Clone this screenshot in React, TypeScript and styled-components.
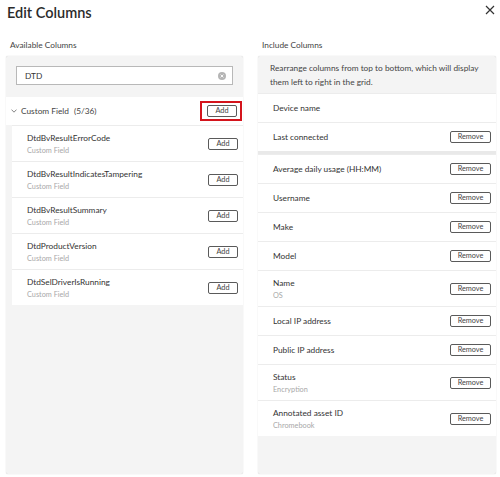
import * as React from "react";
import styled, { createGlobalStyle } from "styled-components";

const GlobalStyle = createGlobalStyle`
  html, body {
    margin: 0;
    padding: 0;
    background: #ffffff;
  }
  body {
    font-family: Lato, "Open Sans", "Liberation Sans", sans-serif;
    color: #333333;
  }
`;

const Dialog = styled.div`
  width: 500px;
  height: 477px;
  box-sizing: border-box;
  padding: 3px 4px 3px 6px;
  background: #ffffff;
  display: flex;
  flex-direction: column;
`;

const Header = styled.div`
  display: flex;
  justify-content: space-between;
  align-items: flex-start;
  height: 36px;
`;

const Title = styled.h1`
  margin: 1px 0 0 1px;
  font-size: 14.5px;
  font-weight: 600;
  color: #2b2b2b;
`;

const CloseButton = styled.button`
  border: 0;
  background: none;
  padding: 0;
  margin: 2px 1px 0 0;
  width: 10px;
  height: 10px;
  cursor: pointer;
  display: flex;
`;

const Columns = styled.div`
  flex: 1;
  display: grid;
  grid-template-columns: 237px 238px;
  column-gap: 15px;
`;

const Section = styled.section`
  display: flex;
  flex-direction: column;
`;

const SectionLabel = styled.div`
  font-size: 8.3px;
  color: #444;
  padding: 0 0 0 4px;
  height: 17px;
  line-height: 12px;
`;

const Panel = styled.div`
  height: 418px;
  background: #f4f4f4;
  box-shadow: 0 0 1px rgba(0, 0, 0, 0.25);
  border-radius: 2px;
  display: flex;
  flex-direction: column;
  overflow: hidden;
`;

const SearchBar = styled.div`
  padding: 10px 10px 12px;
`;

const SearchBox = styled.div`
  height: 19px;
  box-sizing: border-box;
  background: #fff;
  border: 1px solid #b8b8b8;
  display: flex;
  align-items: center;
  padding: 0 6px 0 8px;
  font-size: 8.3px;
  color: #333;
`;

const SearchText = styled.span`
  flex: 1;
`;

const GroupHeader = styled.div`
  height: 28px;
  box-sizing: border-box;
  padding: 0 1px 1px 5px;
  background: #fff;
  display: flex;
  align-items: center;
  font-size: 8.3px;
  color: #444;
`;

const GroupName = styled.span`
  margin-left: 4px;
`;

const GroupCount = styled.span`
  flex: 1;
  margin-left: 5px;
`;

const Highlight = styled.div`
  border: 2.5px solid #d4141c;
  padding: 2px 3px 2px 5px;
  display: flex;
`;

const List = styled.div<{ $indent?: boolean }>`
  margin-left: ${(p) => (p.$indent ? "6px" : "0")};
  background: #fff;
`;

const Row = styled.div<{ $tall?: boolean }>`
  height: ${(p) => (p.$tall ? "36px" : "29px")};
  box-sizing: border-box;
  border-top: 1px solid #ececec;
  display: flex;
  align-items: center;
  justify-content: space-between;
  padding: 0 5px 0 15px;
`;

const Separator = styled.div`
  height: 3px;
  background: #e9e9e9;
`;

const Labels = styled.div`
  display: flex;
  flex-direction: column;
  gap: 3px;
`;

const Name = styled.span`
  font-size: 8.3px;
  color: #333;
`;

const Sub = styled.span`
  font-size: 7.3px;
  color: #a8a8a8;
`;

const ActionButton = styled.button<{ $wide?: boolean }>`
  width: ${(p) => (p.$wide ? "41px" : "30px")};
  height: 12px;
  box-sizing: border-box;
  padding: 0;
  border: 1px solid #5a5a5a;
  border-radius: 2px;
  background: #fff;
  font-family: inherit;
  font-size: 7.3px;
  line-height: 10px;
  color: #444;
  cursor: pointer;
`;

const Hint = styled.div`
  padding: 5px 12px 4px;
  font-size: 8.3px;
  line-height: 14px;
  color: #444;
`;

const ClearIcon = () => (
  <svg width="8" height="8" viewBox="0 0 8 8">
    <circle cx="4" cy="4" r="4" fill="#b5b5b5" />
    <path d="M2.6 2.6 L5.4 5.4 M5.4 2.6 L2.6 5.4" stroke="#fff" strokeWidth="0.9" />
  </svg>
);

const Chevron = () => (
  <svg width="6" height="4" viewBox="0 0 6 4">
    <path d="M0.5 0.6 L3 3.2 L5.5 0.6" stroke="#777" strokeWidth="0.9" fill="none" />
  </svg>
);

const CloseIcon = () => (
  <svg width="10" height="10" viewBox="0 0 10 10">
    <path d="M1 1 L9 9 M9 1 L1 9" stroke="#333" strokeWidth="1.2" />
  </svg>
);

const available = [
  "DtdBvResultErrorCode",
  "DtdBvResultIndicatesTampering",
  "DtdBvResultSummary",
  "DtdProductVersion",
  "DtdSelDriverIsRunning",
];

const pinned = [{ name: "Device name", fixed: true }, { name: "Last connected" }];

const included: { name: string; sub?: string }[] = [
  { name: "Average daily usage (HH:MM)" },
  { name: "Username" },
  { name: "Make" },
  { name: "Model" },
  { name: "Name", sub: "OS" },
  { name: "Local IP address" },
  { name: "Public IP address" },
  { name: "Status", sub: "Encryption" },
  { name: "Annotated asset ID", sub: "Chromebook" },
];

export default function App() {
  return (
    <>
      <GlobalStyle />
      <Dialog>
        <Header>
          <Title>Edit Columns</Title>
          <CloseButton aria-label="Close">
            <CloseIcon />
          </CloseButton>
        </Header>
        <Columns>
          <Section>
            <SectionLabel>Available Columns</SectionLabel>
            <Panel>
              <SearchBar>
                <SearchBox>
                  <SearchText>DTD</SearchText>
                  <ClearIcon />
                </SearchBox>
              </SearchBar>
              <GroupHeader>
                <Chevron />
                <GroupName>Custom Field</GroupName>
                <GroupCount>(5/36)</GroupCount>
                <Highlight>
                  <ActionButton>Add</ActionButton>
                </Highlight>
              </GroupHeader>
              <List $indent>
                {available.map((name) => (
                  <Row key={name} $tall>
                    <Labels>
                      <Name>{name}</Name>
                      <Sub>Custom Field</Sub>
                    </Labels>
                    <ActionButton>Add</ActionButton>
                  </Row>
                ))}
              </List>
            </Panel>
          </Section>
          <Section>
            <SectionLabel>Include Columns</SectionLabel>
            <Panel>
              <Hint>
                Rearrange columns from top to bottom, which will display them left to right in the
                grid.
              </Hint>
              <List>
                {pinned.map((col) => (
                  <Row key={col.name}>
                    <Name>{col.name}</Name>
                    {!col.fixed && <ActionButton $wide>Remove</ActionButton>}
                  </Row>
                ))}
              </List>
              <Separator />
              <List>
                {included.map((col) => (
                  <Row key={col.name} $tall={!!col.sub}>
                    <Labels>
                      <Name>{col.name}</Name>
                      {col.sub && <Sub>{col.sub}</Sub>}
                    </Labels>
                    <ActionButton $wide>Remove</ActionButton>
                  </Row>
                ))}
              </List>
            </Panel>
          </Section>
        </Columns>
      </Dialog>
    </>
  );
}
